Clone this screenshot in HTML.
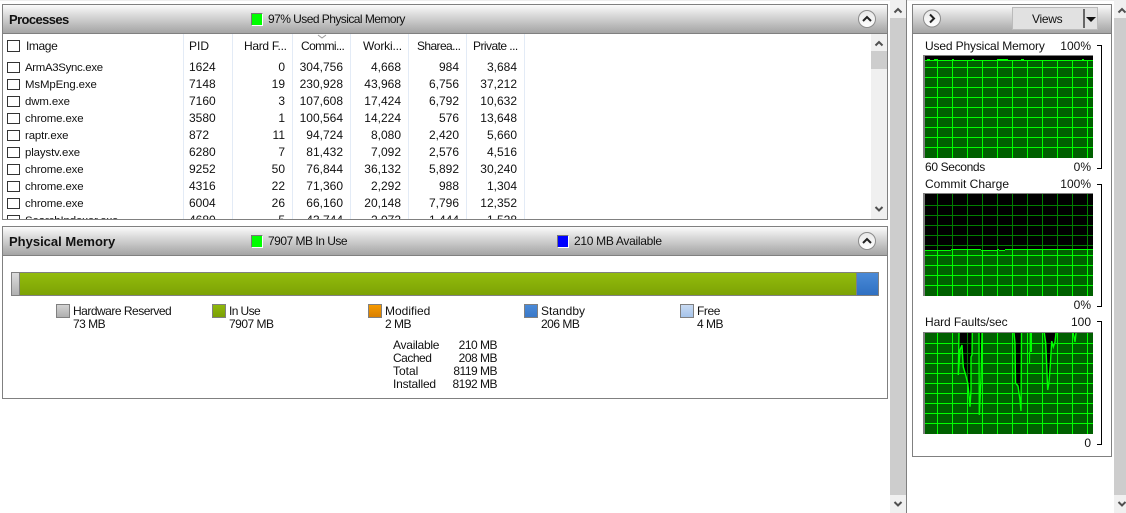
<!DOCTYPE html>
<html>
<head>
<meta charset="utf-8">
<style>
html,body{margin:0;padding:0;background:#fff}
body{width:1126px;height:513px;position:relative;overflow:hidden;font:12px/14px "Liberation Sans",sans-serif;color:#111}
div,span,i,b{position:absolute;display:block;box-sizing:border-box;white-space:nowrap;font-style:normal}
.panel{border:1px solid #808080;background:#fff;overflow:hidden}
.hd{left:0;right:0;top:0;height:29px;background:linear-gradient(#fbfbfb,#e4e4e4 25%,#bdbdbd 70%,#a4a4a4);border-bottom:1px solid #808080}
.tt{font-weight:bold;font-size:13px;top:8px;left:6px;color:#111}
.ind{width:12px;height:13px;border:1px solid;border-color:#777 #fff #fff #777}
.sb{background:#cdcdcd}
.btn{background:#f0f0f0}
.c{left:7px;top:0;width:13px;height:11px;border:1px solid #333;background:#fff}
.r{left:0;width:868px;height:17px}
.r span{top:-2px}
.r span:nth-child(2){left:25px;top:-1px;font-size:11.4px;letter-spacing:-.1px}
.r span:nth-child(3){left:189px}
.r span:nth-child(4){right:583px}
.r span:nth-child(5){right:525px}
.r span:nth-child(6){right:467px}
.r span:nth-child(7){right:409px}
.r span:nth-child(8){right:351px}
.sep{top:34px;width:1px;height:185px;background:#e3ebf6}
.lg{width:14px;height:14px;border:1px solid #808080}
.rt{text-align:right}
.mb{letter-spacing:-.5px}
svg{position:absolute;display:block}
</style>
</head>
<body>
<!-- top strip -->
<div style="left:0;top:0;width:1126px;height:1px;background:#eee"></div>

<!-- Processes panel -->
<div class="panel" style="left:2px;top:4px;width:886px;height:216px">
  <div class="hd">
    <div class="tt" style="letter-spacing:-.6px">Processes</div>
    <div class="ind" style="left:248px;top:8px;background:#0f0"></div>
    <span style="left:265px;top:7px;letter-spacing:-.55px">97% Used Physical Memory</span>
  </div>
</div>
<div class="sep" style="left:183px"></div>
<div class="sep" style="left:232px"></div>
<div class="sep" style="left:292px"></div>
<div class="sep" style="left:350px"></div>
<div class="sep" style="left:408px"></div>
<div class="sep" style="left:466px"></div>
<div class="sep" style="left:524px"></div>
<div class="c" style="top:40px;height:12px"></div>
<span style="left:26px;top:39px;letter-spacing:-.4px">Image</span>
<span style="left:189px;top:39px">PID</span>
<span style="left:244px;top:39px;letter-spacing:-.3px">Hard F...</span>
<span style="left:301px;top:39px;letter-spacing:-.6px">Commi...</span>
<span style="left:363px;top:39px;letter-spacing:-.2px">Worki...</span>
<span style="left:417px;top:39px;letter-spacing:-.6px">Sharea...</span>
<span style="left:473px;top:39px;letter-spacing:-.55px">Private ...</span>
<svg style="left:317px;top:34px" width="10" height="5"><path d="M1 1L5 4L9 1" fill="none" stroke="#999"/></svg>

<div style="left:0;top:34px;width:871px;height:185px;overflow:hidden">
  <div class="r" style="top:28px"><i class="c"></i><span style="letter-spacing:-.3px">ArmA3Sync.exe</span><span>1624</span><span>0</span><span>304,756</span><span>4,668</span><span>984</span><span>3,684</span></div>
  <div class="r" style="top:45px"><i class="c"></i><span>MsMpEng.exe</span><span>7148</span><span>19</span><span>230,928</span><span>43,968</span><span>6,756</span><span>37,212</span></div>
  <div class="r" style="top:62px"><i class="c"></i><span>dwm.exe</span><span>7160</span><span>3</span><span>107,608</span><span>17,424</span><span>6,792</span><span>10,632</span></div>
  <div class="r" style="top:79px"><i class="c"></i><span>chrome.exe</span><span>3580</span><span>1</span><span>100,564</span><span>14,224</span><span>576</span><span>13,648</span></div>
  <div class="r" style="top:96px"><i class="c"></i><span>raptr.exe</span><span>872</span><span>11</span><span>94,724</span><span>8,080</span><span>2,420</span><span>5,660</span></div>
  <div class="r" style="top:113px"><i class="c"></i><span>playstv.exe</span><span>6280</span><span>7</span><span>81,432</span><span>7,092</span><span>2,576</span><span>4,516</span></div>
  <div class="r" style="top:130px"><i class="c"></i><span>chrome.exe</span><span>9252</span><span>50</span><span>76,844</span><span>36,132</span><span>5,892</span><span>30,240</span></div>
  <div class="r" style="top:147px"><i class="c"></i><span>chrome.exe</span><span>4316</span><span>22</span><span>71,360</span><span>2,292</span><span>988</span><span>1,304</span></div>
  <div class="r" style="top:164px"><i class="c"></i><span>chrome.exe</span><span>6004</span><span>26</span><span>66,160</span><span>20,148</span><span>7,796</span><span>12,352</span></div>
  <div class="r" style="top:181px"><i class="c"></i><span>SearchIndexer.exe</span><span>4680</span><span>5</span><span>43,744</span><span>2,072</span><span>1,444</span><span>1,528</span></div>
</div>

<!-- inner scrollbar -->
<div style="left:871px;top:34px;width:16px;height:185px;background:#f0f0f0"></div>
<div style="left:871px;top:51px;width:16px;height:18px;background:#cdcdcd"></div>
<svg style="left:871px;top:34px" width="16" height="185" fill="none" stroke="#505050" stroke-width="2"><path d="M4.5 11.5L8 8L11.5 11.5"/><path d="M4.5 173L8 176.5L11.5 173"/></svg>

<!-- Collapse button 1 -->
<svg style="left:857px;top:9px" width="20" height="20"><defs><linearGradient id="cg" x1="0" y1="0" x2="0" y2="1"><stop offset="0" stop-color="#e8e8e8"/><stop offset="1" stop-color="#fff"/></linearGradient></defs><circle cx="10" cy="10" r="8.5" fill="url(#cg)" stroke="#8c8c8c"/><path d="M6 12L10 8L14 12" fill="none" stroke="#222" stroke-width="2"/></svg>

<!-- Physical memory panel -->
<div class="panel" style="left:2px;top:226px;width:886px;height:173px">
  <div class="hd">
    <div class="tt">Physical Memory</div>
    <div class="ind" style="left:248px;top:8px;background:#0f0"></div>
    <span style="left:265px;top:7px;letter-spacing:-.5px">7907 MB In Use</span>
    <div class="ind" style="left:554px;top:8px;background:#00f"></div>
    <span style="left:571px;top:7px;letter-spacing:-.3px">210 MB Available</span>
  </div>
</div>
<svg style="left:857px;top:231px" width="20" height="20"><circle cx="10" cy="10" r="8.5" fill="url(#cg)" stroke="#8c8c8c"/><path d="M6 12L10 8L14 12" fill="none" stroke="#222" stroke-width="2"/></svg>

<!-- memory bar -->
<div style="left:11px;top:272px;width:868px;height:24px;background:#808080"></div>
<div style="left:12px;top:273px;width:7px;height:22px;background:linear-gradient(#dcdcdc,#b0b0b0)"></div>
<div style="left:20px;top:273px;width:836px;height:22px;background:linear-gradient(#93bc0c,#7ca205)"></div>
<div style="left:857px;top:273px;width:21px;height:22px;background:linear-gradient(#4a8ad8,#2f70c2)"></div>

<div class="lg" style="left:56px;top:304px;background:linear-gradient(#d2d2d2,#aeaeae)"></div>
<span style="left:73px;top:304px;letter-spacing:-.5px">Hardware Reserved</span><span class="mb" style="left:73px;top:317px">73 MB</span>
<div class="lg" style="left:212px;top:304px;background:linear-gradient(#8fb80a,#7ba005)"></div>
<span style="left:229px;top:304px;letter-spacing:-.6px">In Use</span><span class="mb" style="left:229px;top:317px">7907 MB</span>
<div class="lg" style="left:368px;top:304px;background:linear-gradient(#f69a00,#d87f00)"></div>
<span style="left:385px;top:304px">Modified</span><span class="mb" style="left:385px;top:317px">2 MB</span>
<div class="lg" style="left:524px;top:304px;background:linear-gradient(#4a8ad8,#3a78c8)"></div>
<span style="left:541px;top:304px">Standby</span><span class="mb" style="left:541px;top:317px">206 MB</span>
<div class="lg" style="left:680px;top:304px;background:linear-gradient(#c8daf2,#a6c4ea)"></div>
<span style="left:697px;top:304px;letter-spacing:-.4px">Free</span><span class="mb" style="left:697px;top:317px">4 MB</span>

<span style="left:393px;top:338px;letter-spacing:-.25px">Available</span><span class="rt mb" style="left:447px;width:50px;top:338px">210 MB</span>
<span style="left:393px;top:351px;letter-spacing:-.5px">Cached</span><span class="rt mb" style="left:447px;width:50px;top:351px">208 MB</span>
<span style="left:393px;top:364px">Total</span><span class="rt mb" style="left:447px;width:50px;top:364px">8119 MB</span>
<span style="left:393px;top:377px;letter-spacing:-.2px">Installed</span><span class="rt mb" style="left:447px;width:50px;top:377px">8192 MB</span>

<!-- main scrollbar -->
<div class="sb" style="left:890px;top:0;width:16px;height:513px"></div>
<div class="btn" style="left:890px;top:0;width:16px;height:18px"></div>
<div class="btn" style="left:890px;top:495px;width:16px;height:18px"></div>
<svg style="left:890px;top:0" width="16" height="513" fill="none" stroke="#505050" stroke-width="2"><path d="M4.5 12.5L8 9L11.5 12.5"/><path d="M4.5 502L8 505.5L11.5 502"/></svg>
<div style="left:906px;top:0;width:1px;height:513px;background:#808080"></div>

<!-- right panel -->
<div class="panel" style="left:912px;top:4px;width:200px;height:453px">
  <div class="hd"></div>
</div>
<svg style="left:922px;top:9px" width="20" height="20"><circle cx="10" cy="9.5" r="8.5" fill="url(#cg)" stroke="#8c8c8c"/><path d="M8 5.5L12 9.5L8 13.5" fill="none" stroke="#222" stroke-width="2"/></svg>
<div style="left:1012px;top:7px;width:86px;height:23px;background:#e1e1e1;border:1px solid #bbb"></div>
<span style="left:1032px;top:12px;letter-spacing:-.3px">Views</span>
<div style="left:1083px;top:9px;width:2px;height:19px;background:#666"></div>
<svg style="left:1085px;top:16px" width="12" height="7"><path d="M1 1H11L6 6Z" fill="#111"/></svg>

<span style="left:925px;top:39px;letter-spacing:-.15px">Used Physical Memory</span><span class="rt" style="left:1041px;width:50px;top:39px">100%</span>
<span style="left:925px;top:160px;letter-spacing:-.35px">60 Seconds</span><span class="rt" style="left:1041px;width:50px;top:160px">0%</span>
<span style="left:925px;top:177px">Commit Charge</span><span class="rt" style="left:1041px;width:50px;top:177px">100%</span>
<span class="rt" style="left:1041px;width:50px;top:298px">0%</span>
<span style="left:925px;top:315px;letter-spacing:-.1px">Hard Faults/sec</span><span class="rt" style="left:1041px;width:50px;top:315px">100</span>
<span class="rt" style="left:1041px;width:50px;top:436px">0</span>

<!-- brackets -->
<svg style="left:1094px;top:40px" width="10" height="410" fill="none" stroke="#000" shape-rendering="crispEdges"><path d="M3 5.5H7.5V128.5H3"/><path d="M3 144.5H7.5V266.5H3"/><path d="M3 281.5H7.5V404.5H3"/></svg>

<!-- Graph 1 -->
<svg style="left:923px;top:55px" width="170" height="103" viewBox="-1 -1 170 103" shape-rendering="crispEdges">
  <rect x="-1" y="-1" width="170" height="103" fill="#808080"/>
  <rect x="1" y="0" width="168" height="102" fill="#006000"/>
  <path d="M13.5 0V102M28.5 0V102M43.5 0V102M58.5 0V102M73.5 0V102M88.5 0V102M103.5 0V102M118.5 0V102M133.5 0V102M148.5 0V102M163.5 0V102M1 11.5H169M1 21.5H169M1 31.5H169M1 41.5H169M1 51.5H169M1 61.5H169M1 71.5H169M1 81.5H169M1 91.5H169" stroke="#0f0" fill="none"/>
  <rect x="1" y="0" width="168" height="4" fill="#000"/>
  <path d="M1 4.5H169M3 3.5H6M10 3.5H14M28 3.5H30M48 3.5H50M73 3.5H84M97 3.5H100M158 3.5H160" stroke="#0f0" fill="none"/>
</svg>

<!-- Graph 2 -->
<svg style="left:923px;top:193px" width="170" height="103" viewBox="-1 -1 170 103" shape-rendering="crispEdges">
  <rect x="-1" y="-1" width="170" height="103" fill="#808080"/>
  <rect x="1" y="0" width="168" height="56" fill="#000"/>
  <rect x="1" y="56" width="168" height="46" fill="#006000"/>
  <path d="M13.5 0V56M28.5 0V56M43.5 0V56M58.5 0V56M73.5 0V56M88.5 0V56M103.5 0V56M118.5 0V56M133.5 0V56M148.5 0V56M163.5 0V56M1 11.5H169M1 21.5H169M1 31.5H169M1 41.5H169M1 51.5H169" stroke="#007f00" fill="none"/>
  <path d="M13.5 56V102M28.5 56V102M43.5 56V102M58.5 56V102M73.5 56V102M88.5 56V102M103.5 56V102M118.5 56V102M133.5 56V102M148.5 56V102M163.5 56V102M1 61.5H169M1 71.5H169M1 81.5H169M1 91.5H169" stroke="#0f0" fill="none"/>
  <path d="M1 56.5H27M27 55.5H57M57 56.5H73M73 55.5H75M75 56.5H81M81 55.5H169" stroke="#0f0" fill="none"/>
</svg>

<!-- Graph 3 -->
<svg style="left:923px;top:332px" width="170" height="102" viewBox="-1 -1 170 102">
  <defs><clipPath id="blk"><path d="M35 0L34.3 42L36 17L38 12L38.7 25L39.3 34L41.7 42L43.7 50L44.7 59L46 73.7L47 57L47 24L48 22L48.3 0ZM55 0L55.3 82L57 45L58 0ZM90 0L91 10L91.5 50L94 53L95 60L96 67L97 78L97.5 0ZM120.3 0L121.7 10L122.7 32L123.7 57L125 49L126.3 32L127.7 8L129.3 14L131 9L132 0ZM149.3 0L151 9L152 0Z"/></clipPath></defs>
  <rect x="-1" y="-1" width="170" height="102" fill="#808080"/>
  <rect x="1" y="0" width="168" height="101" fill="#006000"/>
  <path shape-rendering="crispEdges" d="M13.5 0V101M28.5 0V101M43.5 0V101M58.5 0V101M73.5 0V101M88.5 0V101M103.5 0V101M118.5 0V101M133.5 0V101M148.5 0V101M163.5 0V101M1 10.5H169M1 20.5H169M1 30.5H169M1 40.5H169M1 50.5H169M1 60.5H169M1 70.5H169M1 80.5H169M1 90.5H169" stroke="#0f0" fill="none"/>
  <g clip-path="url(#blk)">
    <rect x="1" y="0" width="168" height="101" fill="#000"/>
    <path shape-rendering="crispEdges" d="M43.5 0V101M58.5 0V101M148.5 0V101M1 10.5H169M1 20.5H169M1 30.5H169M1 40.5H169M1 50.5H169M1 60.5H169M1 70.5H169M1 80.5H169" stroke="#007f00" fill="none"/>
  </g>
  <path d="M35 0L34.3 42L36 17L38 12L38.7 25L39.3 34L41.7 42L43.7 50L44.7 59L46 73.7L47 57L47 24L48 22L48.3 0M55 0L55.3 82L57 45L58 0M90 0L91 10L91.5 50L94 53L95 60L96 67L97 78L97.5 0M120.3 0L121.7 10L122.7 32L123.7 57L125 49L126.3 32L127.7 8L129.3 14L131 9L132 0M149.3 0L151 9L152 0" stroke="#0f0" stroke-width="1.4" fill="none"/>
  <path d="M106.8 0V19" stroke="#0f0" stroke-width="2.4" fill="none"/>
  <path d="M105.6 19V30" stroke="#0f0" stroke-width="1" fill="none"/>
</svg>

<!-- right scrollbar -->
<div class="sb" style="left:1114px;top:0;width:12px;height:513px"></div>
<div class="btn" style="left:1114px;top:0;width:12px;height:18px"></div>
<div class="btn" style="left:1114px;top:495px;width:12px;height:18px"></div>
<svg style="left:1114px;top:0" width="12" height="513" fill="none" stroke="#505050" stroke-width="2"><path d="M4.5 12.5L8 9L11.5 12.5"/><path d="M4.5 502L8 505.5L11.5 502"/></svg>
</body>
</html>
